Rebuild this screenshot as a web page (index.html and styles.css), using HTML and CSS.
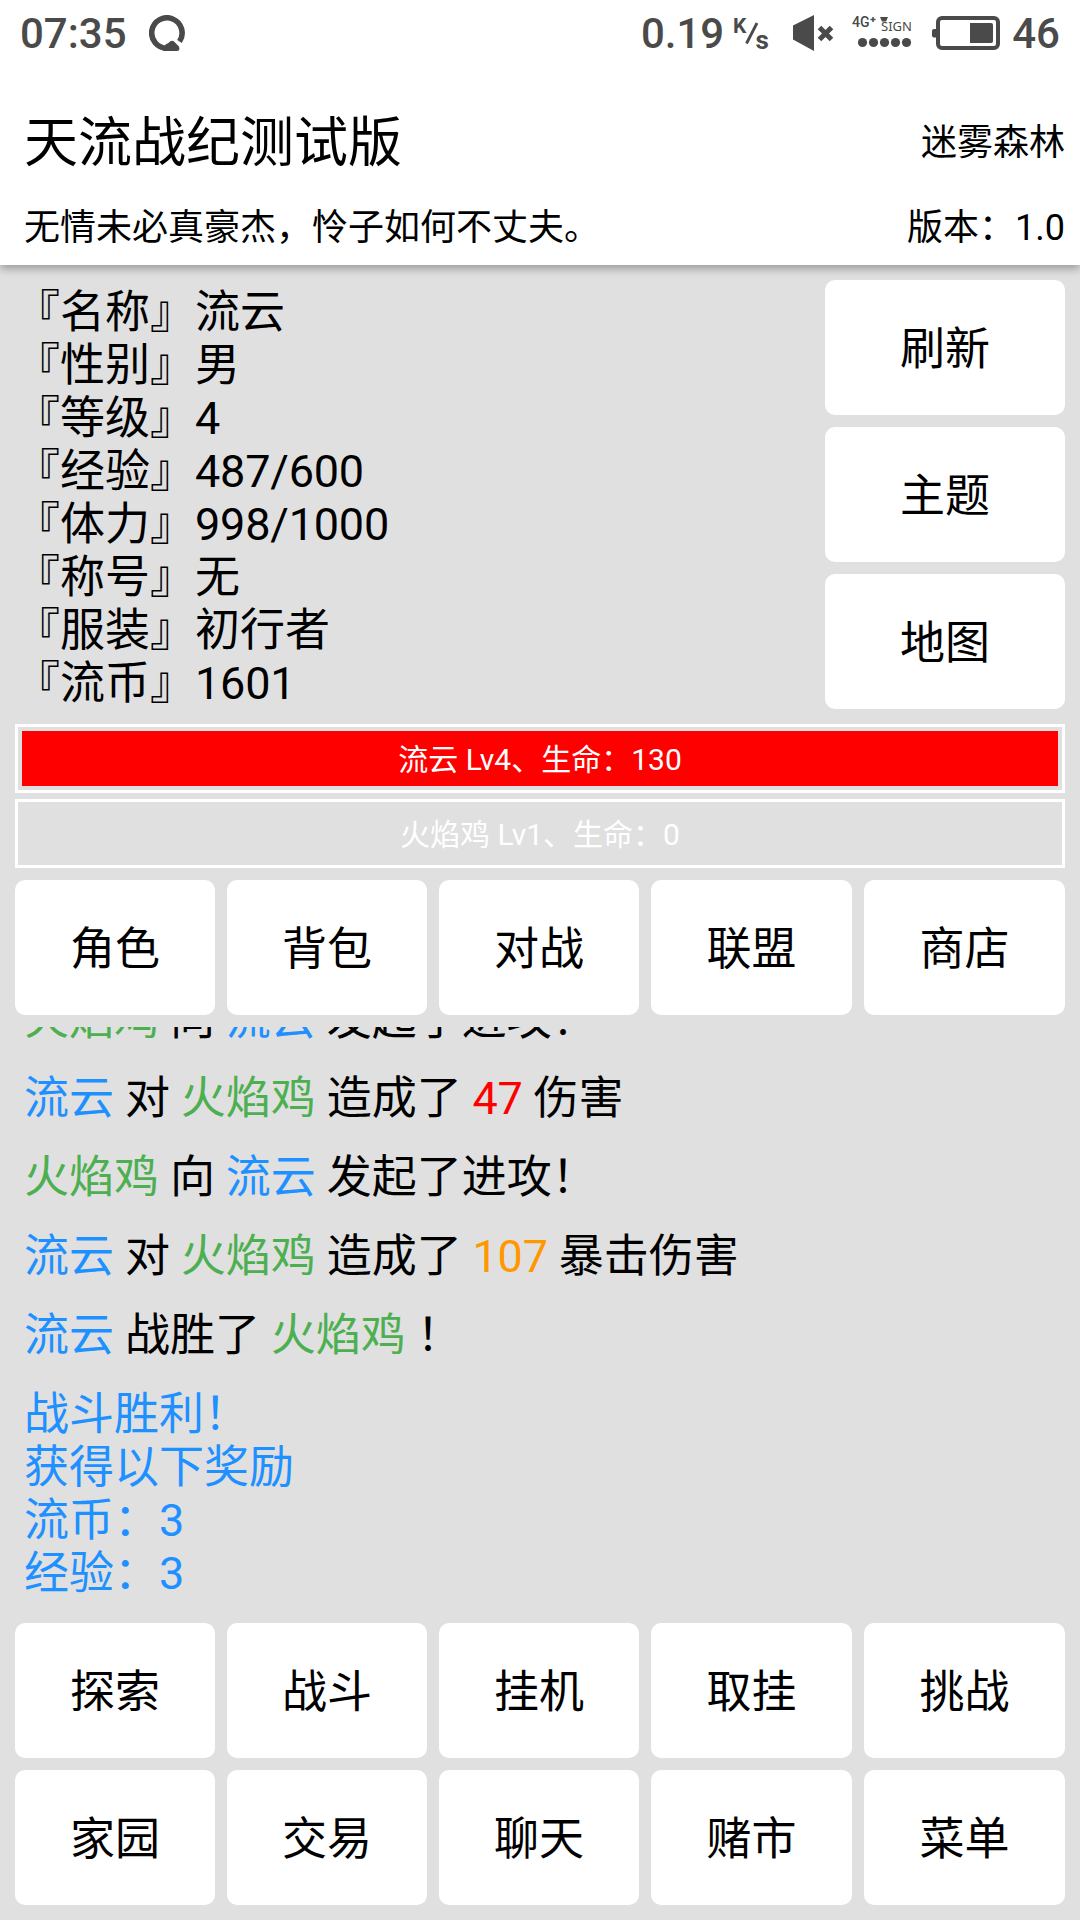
FILE: index.html
```html
<!DOCTYPE html>
<html lang="zh-CN">
<head>
  <meta charset="UTF-8">
  <meta name="viewport" content="width=device-width, initial-scale=1.0">
  <title>天流战纪测试版</title>
  <link rel="stylesheet" href="styles.css">
</head>
<body>

  <header class="header">
    <div class="status-bar">
      <span class="clock">07:35</span>
      <svg class="icon-q" width="36" height="36" viewBox="0 0 36 36">
        <path d="M30.500 26.500A15.2 15.2 0 1 0 18 33.2" fill="none" stroke="#4a4a4a" stroke-width="5.6"/>
        <path d="M14 35.9L16.500 29.500Q20 28 21 26.500Q24 24.500 26.500 28L30 31.500Q31.500 36 27.500 36Z" fill="#4a4a4a"/>
      </svg>
      <span class="speed">0.19</span>
      <svg class="icon-unit" width="38" height="36" viewBox="0 0 38 36">
        <text x="0" y="17.500" class="unit-text">K</text>
        <path d="M13.500 28.500L24 8" stroke="#4a4a4a" stroke-width="2.8"/>
        <text x="22.500" y="33.500" class="unit-text unit-s">s</text>
      </svg>
      <svg class="icon-mute" width="41" height="36" viewBox="0 0 41 36">
        <path d="M0 10.500L21 0V36L0 24.500Z" fill="#4a4a4a"/>
        <path d="M26.500 12.500L38.500 24.500M38.500 12.500L26.500 24.500" stroke="#4a4a4a" stroke-width="5"/>
      </svg>
      <svg class="icon-signal" width="60" height="36" viewBox="0 0 60 36">
        <text x="0" y="12" class="net-text">4G</text>
        <path d="M18.500 4.500H23.500M21 2V7" stroke="#4a4a4a" stroke-width="1.5"/>
        <path d="M28 2H36L34 6.500H30Z" fill="#4a4a4a"/>
        <text x="29" y="16" class="sign-text">SIGN</text>
        <g fill="#4a4a4a">
          <circle cx="10.500" cy="27.500" r="4.600"/>
          <circle cx="21.500" cy="27.500" r="4.600"/>
          <circle cx="32.500" cy="27.500" r="4.600"/>
          <circle cx="43.500" cy="27.500" r="4.600"/>
          <circle cx="54.500" cy="27.500" r="4.600"/>
        </g>
      </svg>
      <svg class="icon-battery" width="68" height="34" viewBox="0 0 68 34">
        <rect x="0" y="13" width="6" height="8.500" rx="2" fill="#4a4a4a"/>
        <rect x="6" y="2" width="60" height="30" rx="4" fill="none" stroke="#4a4a4a" stroke-width="4"/>
        <path d="M38 7H59Q61 7 61 9V25Q61 27 59 27H38Z" fill="#4a4a4a"/>
      </svg>
      <span class="battery-level">46</span>
    </div>

    <div class="title-row">
      <h1 class="title">天流战纪测试版</h1>
      <span class="place">迷雾森林</span>
    </div>
    <div class="sub-row">
      <span>无情未必真豪杰，怜子如何不丈夫。</span>
      <span>版本：1.0</span>
    </div>
  </header>

  <main class="main">
    <section class="info">
      <ul class="stats">
        <li>『名称』流云</li>
        <li>『性别』男</li>
        <li>『等级』<span class="num">4</span></li>
        <li>『经验』<span class="num">487/600</span></li>
        <li>『体力』<span class="num">998/1000</span></li>
        <li>『称号』无</li>
        <li>『服装』初行者</li>
        <li>『流币』<span class="num">1601</span></li>
      </ul>
      <div class="side-buttons">
        <button class="btn">刷新</button>
        <button class="btn">主题</button>
        <button class="btn">地图</button>
      </div>
    </section>

    <section class="bars">
      <div class="bar"><div class="bar-fill player">流云 Lv4、生命：130</div></div>
      <div class="bar"><div class="bar-fill">火焰鸡 Lv1、生命：0</div></div>
    </section>

    <nav class="btn-grid">
      <button class="btn">角色</button>
      <button class="btn">背包</button>
      <button class="btn">对战</button>
      <button class="btn">联盟</button>
      <button class="btn">商店</button>
    </nav>

    <section class="log">
      <p><span class="enemy">火焰鸡</span> 向 <span class="me">流云</span> 发起了进攻！</p>
      <p><span class="me">流云</span> 对 <span class="enemy">火焰鸡</span> 造成了 <span class="damage">47</span> 伤害</p>
      <p><span class="enemy">火焰鸡</span> 向 <span class="me">流云</span> 发起了进攻！</p>
      <p><span class="me">流云</span> 对 <span class="enemy">火焰鸡</span> 造成了 <span class="critical">107</span> 暴击伤害</p>
      <p><span class="me">流云</span> 战胜了 <span class="enemy">火焰鸡</span> ！</p>
      <p class="me">战斗胜利！<br>获得以下奖励<br>流币：3<br>经验：3</p>
    </section>

    <nav class="btn-grid">
      <button class="btn">探索</button>
      <button class="btn">战斗</button>
      <button class="btn">挂机</button>
      <button class="btn">取挂</button>
      <button class="btn">挑战</button>
      <button class="btn">家园</button>
      <button class="btn">交易</button>
      <button class="btn">聊天</button>
      <button class="btn">赌市</button>
      <button class="btn">菜单</button>
    </nav>
  </main>

</body>
</html>
```

FILE: styles.css
```css
:root {
  --bg: #e0e0e0;
  --white: #ffffff;
  --status: #4a4a4a;
  --blue: #1e90ff;
  --green: #4caf50;
  --orange: #ff9800;
  --red: #ff0000;
}

* {
  box-sizing: border-box;
}

body {
  margin: 0;
  height: 1920px;
  display: flex;
  flex-direction: column;
  overflow: hidden;
  background: var(--bg);
  color: #000000;
  font-family: Roboto, "Noto Sans CJK SC", sans-serif;
  font-size: 45px;
  line-height: 53px;
}

/* Cabecera */
.header {
  height: 265px;
  flex-shrink: 0;
  background: var(--white);
  box-shadow: 0 4px 8px rgba(0, 0, 0, 0.3);
}

.status-bar {
  display: flex;
  align-items: center;
  height: 66px;
  padding: 0 20px;
  color: var(--status);
  font-size: 42px;
  font-weight: 500;
  line-height: 66px;
}

.icon-q {
  margin-left: 22px;
}

.speed {
  margin-left: auto;
}

.icon-unit {
  margin-left: 9px;
  margin-right: 1px;
}

.icon-mute {
  margin-left: 21px;
}

.icon-signal {
  margin-left: 18px;
}

.icon-battery {
  margin-left: 20px;
}

.battery-level {
  margin-left: 12px;
}

.clock,
.speed,
.battery-level {
  padding-top: 1px;
}

.unit-text {
  font-size: 21px;
  font-weight: 700;
  fill: var(--status);
}

.unit-s {
  font-size: 26px;
}

.net-text {
  font-size: 14px;
  font-weight: 500;
  fill: var(--status);
}

.sign-text {
  font-family: "Noto Sans", sans-serif;
  font-size: 13px;
  font-weight: 400;
  fill: var(--status);
}

.title-row,
.sub-row {
  display: flex;
  justify-content: space-between;
  align-items: center;
  padding: 0 15px 0 24px;
  font-size: 36px;
}

.title-row {
  height: 150px;
  padding-top: 5px;
  margin-bottom: -22px;
}

.title {
  margin: 0;
  font-size: 54px;
  font-weight: 400;
}

.sub-row {
  height: 68px;
}

/* Contenido */
.main {
  flex: 1;
  min-height: 0;
  display: flex;
  flex-direction: column;
  padding: 15px;
}

.info {
  display: flex;
  justify-content: space-between;
  height: 429px;
}

.stats {
  margin: 0;
  padding: 6px 0 0;
  list-style: none;
}

.num {
  letter-spacing: -0.2px;
}

.side-buttons {
  width: 240px;
  display: flex;
  flex-direction: column;
  gap: 12px;
}

.btn {
  height: 135px;
  padding: 4px 0 0;
  border: none;
  border-radius: 10px;
  background: var(--white);
  color: #000000;
  font: inherit;
}

.bars {
  display: flex;
  flex-direction: column;
  gap: 6px;
  margin: 15px 0 12px;
}

.bar {
  height: 69px;
  padding: 4px;
  border: 3px solid var(--white);
}

.bar-fill {
  height: 55px;
  color: var(--white);
  font-size: 30px;
  line-height: 57px;
  text-align: center;
}

.bar-fill.player {
  background: var(--red);
}

.btn-grid {
  display: grid;
  grid-template-columns: 200px 200px 200px 201px 201px;
  gap: 12px;
}

/* El registro queda anclado abajo y se corta por arriba */
.log {
  flex: 1;
  min-height: 0;
  display: flex;
  flex-direction: column;
  justify-content: flex-end;
  gap: 26px;
  margin: 12px 0;
  padding: 0 9px 11px;
  overflow: hidden;
  word-spacing: -0.3px;
}

.log p {
  margin: 0;
}

.me {
  color: var(--blue);
}

.enemy {
  color: var(--green);
}

.damage,
.critical {
  letter-spacing: -0.2px;
}

.damage {
  color: var(--red);
}

.critical {
  color: var(--orange);
}
```
